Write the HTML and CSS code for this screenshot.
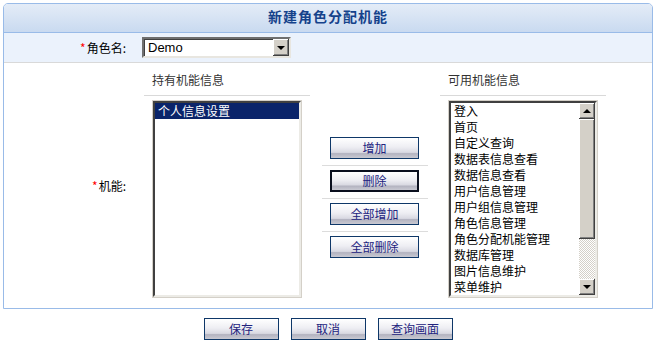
FILE: index.html
```html
<!DOCTYPE html>
<html lang="zh-CN">
<head>
  <meta charset="UTF-8" />
  <title>新建角色分配机能</title>
  <link rel="stylesheet" href="styles.css">
</head>
<body>
  <div class="frame">
    <div class="title">新建角色分配机能</div>

    <div class="row-name">
      <div class="label"><span class="req">*</span>角色名:</div>
      <div class="combo">
        <span class="combo-text">Demo</span>
        <span class="combo-btn"><i class="arrow-down"></i></span>
      </div>
    </div>

    <div class="row-func">
      <div class="label label-mid"><span class="req">*</span>机能:</div>

      <div class="col">
        <div class="col-head">持有机能信息</div>
        <div class="listbox">
          <div class="listbox-in">
            <div class="items">
              <div class="item selected">个人信息设置</div>
            </div>
          </div>
        </div>
      </div>

      <div class="mid">
        <div class="group"><button class="btn">增加</button></div>
        <div class="group"><button class="btn btn-default">删除</button></div>
        <div class="group"><button class="btn">全部增加</button></div>
        <div class="group last"><button class="btn">全部删除</button></div>
      </div>

      <div class="col">
        <div class="col-head">可用机能信息</div>
        <div class="listbox">
          <div class="listbox-in">
            <div class="items">
              <div class="item">登入</div>
              <div class="item">首页</div>
              <div class="item">自定义查询</div>
              <div class="item">数据表信息查看</div>
              <div class="item">数据信息查看</div>
              <div class="item">用户信息管理</div>
              <div class="item">用户组信息管理</div>
              <div class="item">角色信息管理</div>
              <div class="item">角色分配机能管理</div>
              <div class="item">数据库管理</div>
              <div class="item">图片信息维护</div>
              <div class="item">菜单维护</div>
            </div>
            <div class="scrollbar">
              <div class="sb-btn"><i class="arrow-up"></i></div>
              <div class="sb-thumb"></div>
              <div class="sb-track"></div>
              <div class="sb-btn"><i class="arrow-down"></i></div>
            </div>
          </div>
        </div>
      </div>
    </div>
  </div>

  <div class="actions">
    <button class="btn btn-wide">保存</button>
    <button class="btn btn-wide">取消</button>
    <button class="btn btn-wide">查询画面</button>
  </div>
</body>
</html>
```

FILE: styles.css
```css
body {
  margin: 0;
  font-family: "Noto Sans CJK SC", "DejaVu Sans", sans-serif;
  font-size: 12px;
  background: #fff;
  color: #000;
}
.frame {
  margin: 3px 0 0 3px;
  width: 650px;
  box-sizing: border-box;
  border: 1px solid #99bbe8;
  border-radius: 5px 5px 0 0;
}
.title {
  height: 28px;
  line-height: 24px;
  text-align: center;
  font-size: 14px;
  font-weight: bold;
  letter-spacing: 1px;
  color: #15428b;
  background: linear-gradient(#e4ecf7, #c9daf0);
  border-bottom: 1px solid #99bbe8;
  border-radius: 4px 4px 0 0;
}
.row-name {
  display: flex;
  align-items: center;
  height: 29px;
  background: #ebf2fc;
  border-bottom: 1px solid #d9d9d9;
}
.label {
  width: 140px;
  box-sizing: border-box;
  padding-right: 18px;
  text-align: right;
}
.req {
  color: #f00;
  margin-right: 1px;
}
.combo {
  display: flex;
  margin-left: -2px;
  width: 149px;
  height: 21px;
  box-sizing: border-box;
  border: 2px solid;
  border-color: #6f6f6f #e8e6e0 #e8e6e0 #6f6f6f;
  box-shadow: inset 1px 1px #404040;
  background: #fff;
}
.combo-text {
  flex: 1;
  padding-left: 4px;
  font-family: "Liberation Sans", Arial, sans-serif;
  font-size: 13px;
  line-height: 17px;
}
.combo-btn {
  width: 16px;
  height: 17px;
  box-sizing: border-box;
  display: flex;
  align-items: center;
  justify-content: center;
  background: #d4d0c8;
  box-shadow: inset -1px -1px #404040, inset 1px 1px #fff, inset -2px -2px #808080;
}
.arrow-down, .arrow-up {
  display: block;
  width: 0;
  height: 0;
  border-left: 4px solid transparent;
  border-right: 4px solid transparent;
}
.arrow-down {
  border-top: 4px solid #000;
}
.arrow-up {
  border-bottom: 4px solid #000;
}
.row-func {
  display: grid;
  grid-template-columns: 140px 166px 130px 166px;
  height: 245px;
}
.label-mid {
  align-self: center;
}
.col-head {
  height: 33px;
  box-sizing: border-box;
  padding: 9px 0 0 8px;
  line-height: 16px;
  color: #333;
  border-bottom: 1px solid #d9d9d9;
}
.listbox {
  margin: 4px 0 0 8px;
  width: 150px;
  height: 198px;
  box-sizing: border-box;
  border: 1px solid #d4d0c8;
}
.listbox-in {
  display: flex;
  height: 100%;
  box-sizing: border-box;
  border: 2px solid;
  border-color: #404040 #ecebe6 #ecebe6 #404040;
  background: #fff;
}
.items {
  flex: 1;
  overflow: hidden;
}
.item {
  height: 16px;
  line-height: 16px;
  padding-left: 3px;
  white-space: nowrap;
}
.item.selected {
  background: #0a246a;
  color: #fff;
}
.scrollbar {
  width: 16px;
  display: flex;
  flex-direction: column;
}
.sb-btn, .sb-thumb {
  background: #d4d0c8;
  box-shadow: inset -1px -1px #404040, inset 1px 1px #fff, inset -2px -2px #808080;
}
.sb-btn {
  height: 16px;
  display: flex;
  align-items: center;
  justify-content: center;
}
.sb-thumb {
  height: 120px;
}
.sb-track {
  flex: 1;
  background: conic-gradient(#fff 25%, #d4d0c8 0 50%, #fff 0 75%, #d4d0c8 0) 0 0 / 2px 2px;
}
.mid {
  padding: 70px 12px 0;
}
.group {
  padding: 4px 0 6px 8px;
  border-bottom: 1px solid #dcdcdc;
}
.group.last {
  border-bottom: none;
}
.btn {
  display: block;
  width: 89px;
  height: 22px;
  padding: 0;
  box-sizing: border-box;
  border: 1px solid #0e3768;
  font-family: "Noto Sans CJK SC", sans-serif;
  font-size: 12px;
  line-height: 18px;
  color: #23237e;
  background: linear-gradient(#ffffff 0%, #eeeef3 45%, #d9d9e2 72%, #b3b3c0 78%, #c9c9d2 100%);
}
.btn-default {
  border: 2px solid #0a0f1e;
}
.actions {
  display: flex;
  justify-content: center;
  gap: 12px;
  margin-top: 9px;
  width: 656px;
}
.btn-wide {
  width: 75px;
}
```
